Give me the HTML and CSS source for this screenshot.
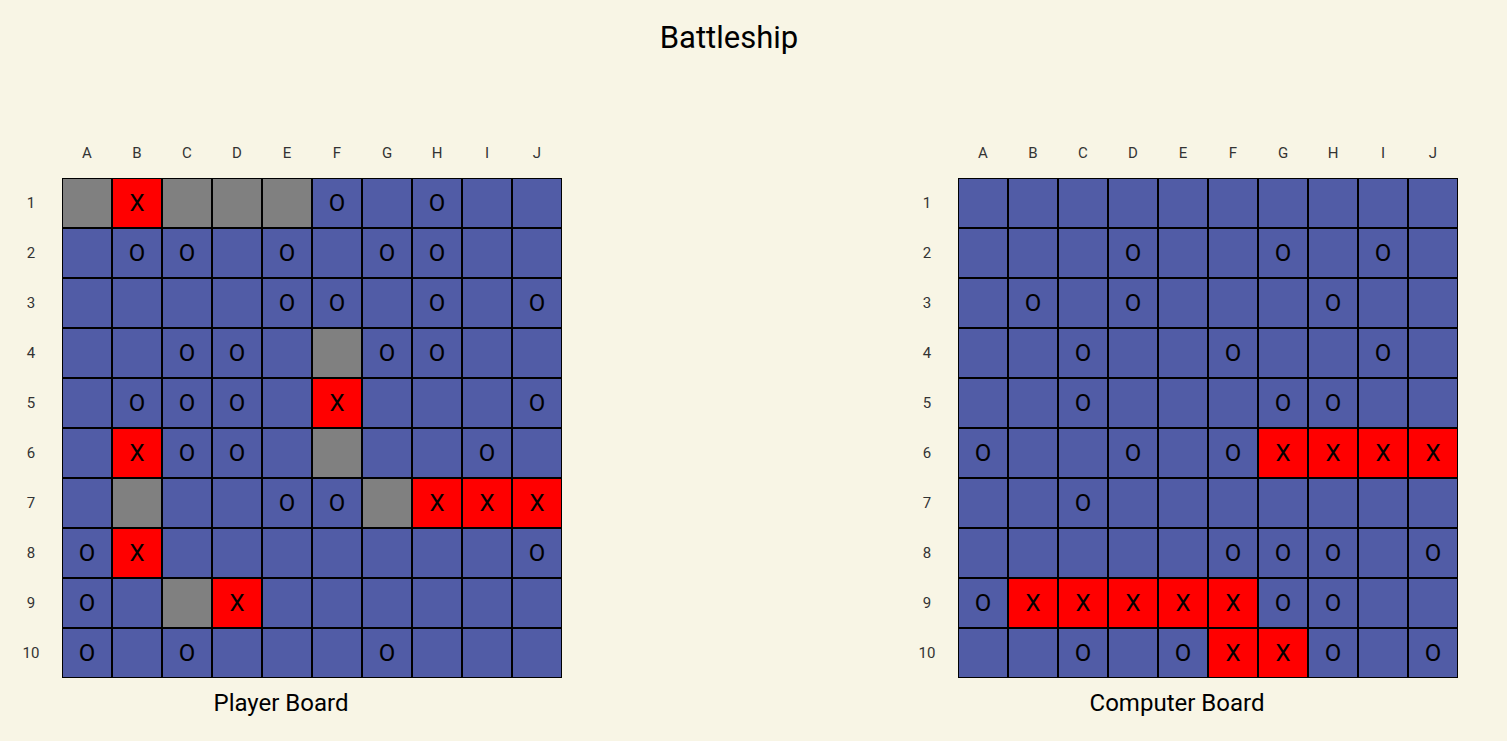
FILE: index.html
```html
<!DOCTYPE html>
<html lang="en">
<head>
  <meta charset="UTF-8" />
  <title>Battleship</title>
  <link rel="stylesheet" href="styles.css">
</head>
<body>

<div class="game">
  <h1>Battleship</h1>

  <div class="boards">
    <div class="board">
      <div class="grid" id="playerGrid"></div>
      <h2>Player Board</h2>
    </div>
    <div class="board">
      <div class="grid" id="computerGrid"></div>
      <h2>Computer Board</h2>
    </div>
  </div>
</div>

<script>
  const LETTERS = "ABCDEFGHIJ";

  // . = water, s = ship, O = miss, x = hit
  const playerBoard = [
    "sxsssO.O..",
    ".OO.O.OO..",
    "....OO.O.O",
    "..OO.sOO..",
    ".OOO.x...O",
    ".xOO.s..O.",
    ".s..OOsxxx",
    "Ox.......O",
    "O.sx......",
    "O.O...O..."
  ];

  const computerBoard = [
    "..........",
    "...O..O.O.",
    ".O.O...O..",
    "..O..O..O.",
    "..O...OO..",
    "O..O.Oxxxx",
    "..O.......",
    ".....OOO.O",
    "OxxxxxOO..",
    "..O.OxxO.O"
  ];

  function buildGrid(id, rows) {
    const grid = document.getElementById(id);
    grid.appendChild(document.createElement("div"));
    for (const letter of LETTERS) {
      const label = document.createElement("div");
      label.className = "label";
      label.textContent = letter;
      grid.appendChild(label);
    }
    rows.forEach((row, r) => {
      const label = document.createElement("div");
      label.className = "label";
      label.textContent = r + 1;
      grid.appendChild(label);
      for (const ch of row) {
        const cell = document.createElement("div");
        cell.className = "cell";
        if (ch === "s") cell.classList.add("ship");
        if (ch === "x") {
          cell.classList.add("hit");
          cell.textContent = "X";
        }
        if (ch === "O") cell.textContent = "O";
        grid.appendChild(cell);
      }
    });
  }

  buildGrid("playerGrid", playerBoard);
  buildGrid("computerGrid", computerBoard);
</script>

</body>
</html>
```

FILE: styles.css
```css
body {
  margin: 0;
  font-family: Roboto, "Liberation Sans", sans-serif;
  background-color: #f8f5e5;
  color: #000;
}
.game {
  width: 1458px;
}
h1 {
  margin: 19px 0 0;
  font-size: 31px;
  line-height: 38px;
  font-weight: normal;
  text-align: center;
}
.boards {
  display: flex;
  justify-content: space-between;
  margin-top: 71px;
}
.board {
  width: 562px;
}
.grid {
  display: grid;
  grid-template-columns: 62px repeat(10, 50px);
  grid-auto-rows: 50px;
}
.label {
  display: flex;
  align-items: center;
  justify-content: center;
  font-size: 15px;
  color: #333;
}
.cell {
  display: flex;
  align-items: center;
  justify-content: center;
  box-sizing: border-box;
  border: 1px solid #000;
  background: #515ca6;
  font-size: 24px;
}
.cell.ship {
  background: #808080;
}
.cell.hit {
  background: #ff0000;
}
h2 {
  margin: 11px 0 0;
  font-size: 24px;
  line-height: 28px;
  font-weight: normal;
  text-align: center;
}
```
